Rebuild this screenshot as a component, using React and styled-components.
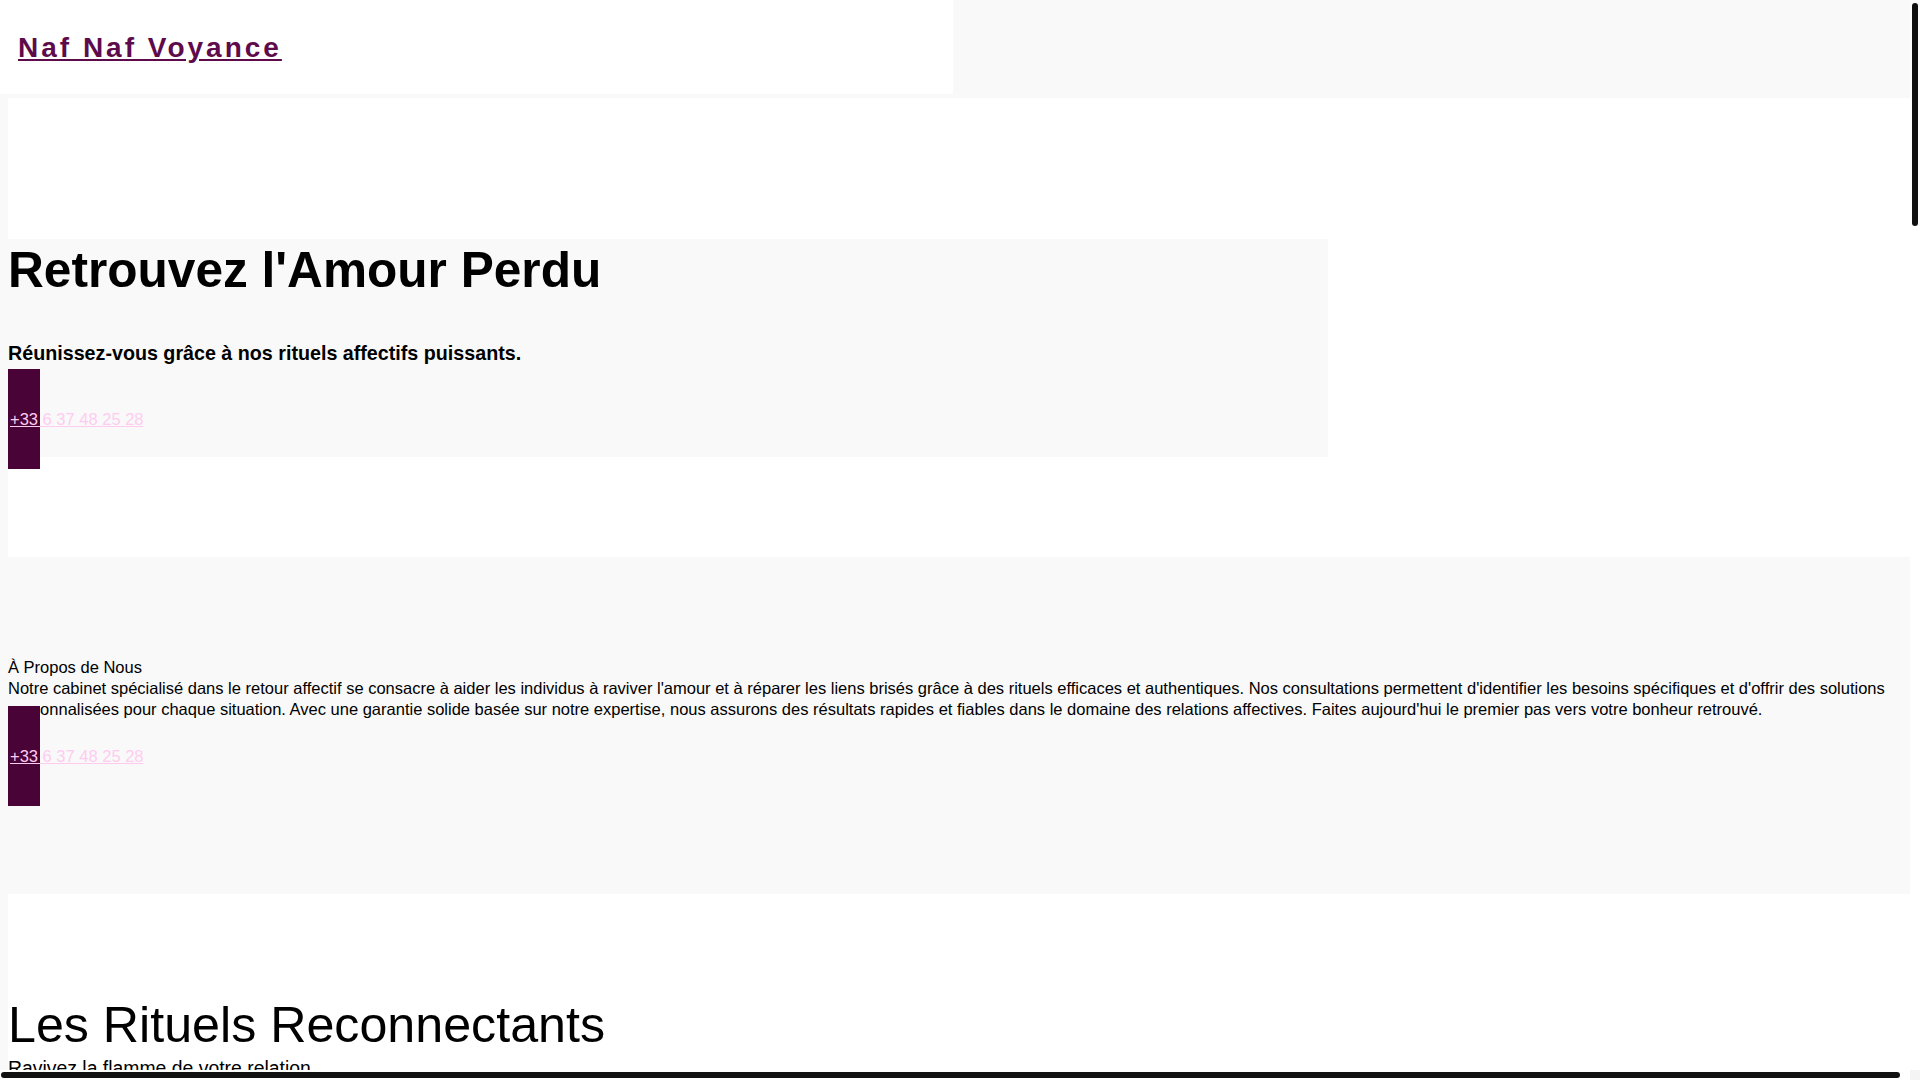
import React from 'react'
import styled, { createGlobalStyle } from 'styled-components'

const GlobalStyle = createGlobalStyle`
  html {
    background: #f9f9f9;
  }
  body {
    margin: 0;
    background: #f9f9f9;
    color: #000;
    font-family: "Liberation Sans", Arial, sans-serif;
  }
`

const Page = styled.div`
  width: calc(100vw - 10px);
`

const Header = styled.header`
  box-sizing: border-box;
  width: calc(50% - 2px);
  background: #fff;
  padding: 32px 18px 30px;
  margin-bottom: 4px;
  font-size: 28px;
  line-height: 32px;
`

const Logo = styled.a`
  font-weight: 700;
  letter-spacing: 3px;
  color: #5e0b4c;
  text-decoration: underline;
`

const Section = styled.section`
  display: flow-root;
  width: 100%;
  margin-left: 8px;
  background: ${p => (p.$tone === 'gray' ? '#f9f9f9' : '#fff')};
  padding: ${p => p.$pad || '100px 0'};
`

const Hero = styled.div`
  display: flow-root;
  max-width: 1320px;
  background: #f9f9f9;
`

const Title = styled.h1`
  margin: 0;
  font-size: 49.6px;
  font-weight: 700;
  line-height: 62px;
`

const Lead = styled.p`
  margin: 41px 0 0;
  font-size: 19.7px;
  font-weight: 700;
  line-height: 23px;
`

const Cta = styled.a`
  position: relative;
  display: block;
  box-sizing: border-box;
  width: 32px;
  height: 100px;
  padding-left: 2px;
  margin-top: ${p => p.$top}px;
  margin-bottom: -12px;
  background: #4a0336;
  color: #ffccf0;
  font-size: 16.5px;
  line-height: 100px;
  white-space: nowrap;
  text-decoration: underline;
`

const SmallHeading = styled.h2`
  margin: 0;
  font-size: 16.5px;
  font-weight: 400;
  line-height: 20.8px;
`

const Text = styled.p`
  margin: ${p => p.$top || 0}px 0 0;
  font-size: 16.5px;
  line-height: 20.8px;
`

const BigHeading = styled.h2`
  margin: 0;
  font-size: 50.2px;
  font-weight: 400;
  line-height: 57px;
`

const Sub = styled.p`
  margin: 3px 0 0;
  font-size: 19.4px;
  line-height: 22px;
`

const Cards = styled.div`
  display: grid;
  grid-template-columns: repeat(3, 1fr);
  gap: 24px;
  max-width: 1320px;
  margin-top: 60px;
`

const Card = styled.article`
  background: #f9f9f9;
  padding: 32px 24px;
  min-height: 220px;
`

const CardTitle = styled.h3`
  margin: 0 0 12px;
  font-size: 24px;
  color: #4a0336;
`

const List = styled.ul`
  margin: 24px 0 0;
  padding-left: 20px;
  font-size: 16.5px;
  line-height: 28px;
`

const Quote = styled.blockquote`
  margin: 32px 0 0;
  max-width: 900px;
  font-size: 18px;
  line-height: 28px;
  font-style: italic;
`

const Author = styled.p`
  margin: 8px 0 0;
  font-size: 15px;
  color: #5e0b4c;
`

const Footer = styled.footer`
  margin-left: 8px;
  padding: 40px 0;
  background: #4a0336;
  color: #ffccf0;
  font-size: 14px;
  text-align: center;
`

/* drawn scrollbars, as in the screenshot */
const VTrack = styled.div`
  position: fixed;
  top: 0;
  right: 0;
  width: 10px;
  height: calc(100vh - 10px);
  background: #fff;
`

const VThumb = styled.div`
  width: 6px;
  height: 223px;
  margin: 3px 0 0 2px;
  border-radius: 3px;
  background: #111;
`

const HTrack = styled.div`
  position: fixed;
  left: 0;
  bottom: 0;
  display: flex;
  width: 100vw;
  height: 10px;
`

const HBar = styled.div`
  flex: 1;
  background: #fff;
  padding: 2px 0 2px 1px;
`

const HThumb = styled.div`
  width: 1899px;
  height: 6px;
  border-radius: 3px;
  background: #111;
`

const Corner = styled.div`
  width: 10px;
  background: #f4f4f4;
`

const rituals = [
  ['Rituel du Retour', "Un rituel affectif pour faire revenir l'être aimé et renouer le dialogue."],
  ['Rituel de Réconciliation', 'Apaisez les tensions et retrouvez la complicité des premiers jours.'],
  ['Rituel de Fidélité', 'Renforcez le lien qui vous unit et protégez votre couple durablement.'],
]

const quotes = [
  ["Mon compagnon est revenu après trois semaines. Je ne pensais plus que c'était possible.", 'Sophie, Lyon'],
  ['Une écoute sincère et des résultats rapides. Merci pour votre aide précieuse.', 'Karim, Marseille'],
  ['Nous avons retrouvé notre complicité, notre relation est plus forte que jamais.', 'Julie, Paris'],
]

export default function App() {
  return (
    <Page>
      <GlobalStyle />
      <Header>
        <Logo href="#">Naf Naf Voyance</Logo>
      </Header>

      <Section $pad="141px 0 100px">
        <Hero>
          <Title>Retrouvez l'Amour Perdu</Title>
          <Lead>Réunissez-vous grâce à nos rituels affectifs puissants.</Lead>
          <Cta href="#" $top={4}>+33 6 37 48 25 28</Cta>
        </Hero>
      </Section>

      <Section $tone="gray">
        <SmallHeading>À Propos de Nous</SmallHeading>
        <Text>
          Notre cabinet spécialisé dans le retour affectif se consacre à aider les individus à raviver l'amour et à
          réparer les liens brisés grâce à des rituels efficaces et authentiques. Nos consultations permettent
          d'identifier les besoins spécifiques et d'offrir des solutions personnalisées pour chaque situation. Avec une
          garantie solide basée sur notre expertise, nous assurons des résultats rapides et fiables dans le domaine des
          relations affectives. Faites aujourd'hui le premier pas vers votre bonheur retrouvé.
        </Text>
        <Cta href="#" $top={-13}>+33 6 37 48 25 28</Cta>
      </Section>

      <Section $pad="103px 0 100px">
        <BigHeading>Les Rituels Reconnectants</BigHeading>
        <Sub>Ravivez la flamme de votre relation</Sub>
        <Cta href="#" $top={-8}>+33 6 37 48 25 28</Cta>
        <Cards>
          {rituals.map(([t, d]) => (
            <Card key={t}>
              <CardTitle>{t}</CardTitle>
              <Text>{d}</Text>
            </Card>
          ))}
        </Cards>
      </Section>

      <Section $tone="gray">
        <BigHeading>Pourquoi Nous Choisir</BigHeading>
        <Sub>Une expertise reconnue au service de votre bonheur</Sub>
        <List>
          <li>Consultations confidentielles et personnalisées</li>
          <li>Rituels authentiques transmis de génération en génération</li>
          <li>Résultats rapides et durables</li>
          <li>Accompagnement avant, pendant et après le rituel</li>
          <li>Disponibilité 7 jours sur 7</li>
        </List>
        <Cta href="#" $top={40}>+33 6 37 48 25 28</Cta>
      </Section>

      <Section>
        <BigHeading>Témoignages</BigHeading>
        <Sub>Ils ont retrouvé l'amour</Sub>
        {quotes.map(([q, a]) => (
          <div key={a}>
            <Quote>« {q} »</Quote>
            <Author>{a}</Author>
          </div>
        ))}
      </Section>

      <Section $tone="gray" $pad="100px 0 520px">
        <BigHeading>Contactez-Nous</BigHeading>
        <Sub>Appelez-nous dès aujourd'hui pour une consultation</Sub>
        <Text $top={24}>Disponible du lundi au dimanche, de 9h à 21h.</Text>
        <Cta href="#" $top={40}>+33 6 37 48 25 28</Cta>
      </Section>

      <Footer>© Naf Naf Voyance — Tous droits réservés</Footer>

      <VTrack>
        <VThumb />
      </VTrack>
      <HTrack>
        <HBar>
          <HThumb />
        </HBar>
        <Corner />
      </HTrack>
    </Page>
  )
}
